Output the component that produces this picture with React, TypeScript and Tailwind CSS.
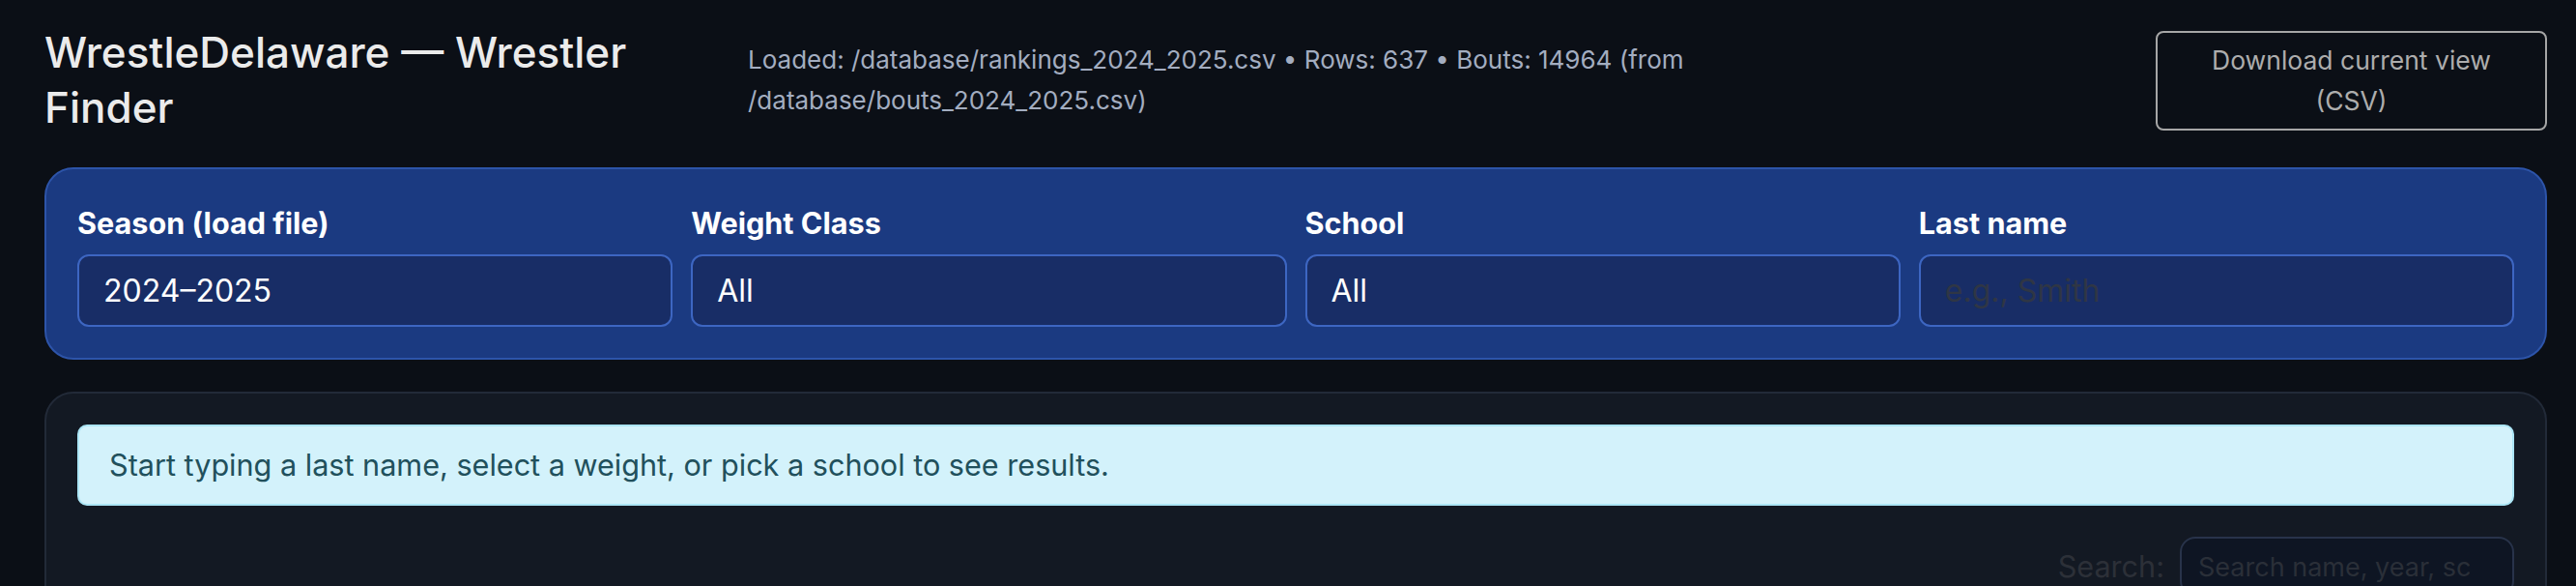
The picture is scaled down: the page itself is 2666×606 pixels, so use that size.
import { useState } from 'react'

const SEASONS = ['2024–2025', '2023–2024', '2022–2023']
const WEIGHTS = ['All', '106', '113', '120', '126', '132', '138', '144', '150', '157', '165', '175', '190', '215', '285']
const SCHOOLS = ['All']

const labelCls = 'block text-[30.6px] leading-[41px] font-bold text-white mb-[12px]'
const fieldCls =
  'w-full h-[75px] appearance-none rounded-[12px] border-2 border-[#3d66c2] bg-[#182d66] px-[25px] text-[32px] text-white outline-none placeholder:text-[#2f3645]'

function Field({ label, children }: { label: string; children: React.ReactNode }) {
  return (
    <div>
      <label className={labelCls}>{label}</label>
      {children}
    </div>
  )
}

export default function App() {
  const [season, setSeason] = useState(SEASONS[0])
  const [weight, setWeight] = useState('All')
  const [school, setSchool] = useState('All')
  const [lastName, setLastName] = useState('')
  const [search, setSearch] = useState('')

  return (
    <div className="min-h-screen bg-[#0b0f16] pl-[46px] pr-[30px] pt-[26px] font-['Inter','Noto_Sans',sans-serif]">
      {/* Header */}
      <header className="flex items-center">
        <div className="w-[728px] shrink-0">
          <h1 className="w-[700px] text-[44px] leading-[57px] font-medium text-[#ebebeb]">
            WrestleDelaware — Wrestler Finder
          </h1>
        </div>
        <p className="w-[1100px] text-[26px] leading-[42px] text-[#a3adc0]">
          Loaded: /database/rankings_2024_2025.csv • Rows: 637 • Bouts: 14964 (from /database/bouts_2024_2025.csv)
        </p>
        <button className="ml-auto w-[405px] h-[103px] shrink-0 rounded-[8px] border-2 border-[#a6a6a6] px-[44px] text-center text-[26.5px] leading-[42px] text-[#adadad]">
          Download current view (CSV)
        </button>
      </header>

      {/* Filters */}
      <section className="mt-[33px] rounded-[30px] border-2 border-[#2d54a9] bg-[#1b3a81] px-[32px] pt-[35px] pb-[32px]">
        <div className="grid grid-cols-4 gap-x-[19px]">
          <Field label="Season (load file)">
            <select className={fieldCls} value={season} onChange={e => setSeason(e.target.value)}>
              {SEASONS.map(s => <option key={s}>{s}</option>)}
            </select>
          </Field>
          <Field label="Weight Class">
            <select className={fieldCls} value={weight} onChange={e => setWeight(e.target.value)}>
              {WEIGHTS.map(w => <option key={w}>{w}</option>)}
            </select>
          </Field>
          <Field label="School">
            <select className={fieldCls} value={school} onChange={e => setSchool(e.target.value)}>
              {SCHOOLS.map(s => <option key={s}>{s}</option>)}
            </select>
          </Field>
          <Field label="Last name">
            <input className={fieldCls} value={lastName} onChange={e => setLastName(e.target.value)} placeholder="e.g., Smith" />
          </Field>
        </div>
      </section>

      {/* Results */}
      <section className="mt-[33px] rounded-[30px] border-2 border-[#222a38] bg-[#131923] p-[32px]">
        <div className="rounded-[10px] border-2 border-[#abe5f5] bg-[#d3f2fb] px-[31px] py-[18px] text-[30.6px] leading-[44px] text-[#21505c]">
          Start typing a last name, select a weight, or pick a school to see results.
        </div>
        <div className="mt-[32px] flex items-center justify-end gap-[16px]">
          <label className="text-[30.6px] text-[#2c3038]">Search:</label>
          <input
            value={search}
            onChange={e => setSearch(e.target.value)}
            placeholder="Search name, year, school…"
            className="w-[346px] h-[62px] rounded-[16px] border-2 border-[#28334a] bg-[#0e1523] pl-[17px] pr-[44px] text-[27px] text-[#c8cdd6] outline-none placeholder:text-[#2a2f38]"
          />
        </div>
      </section>
    </div>
  )
}
